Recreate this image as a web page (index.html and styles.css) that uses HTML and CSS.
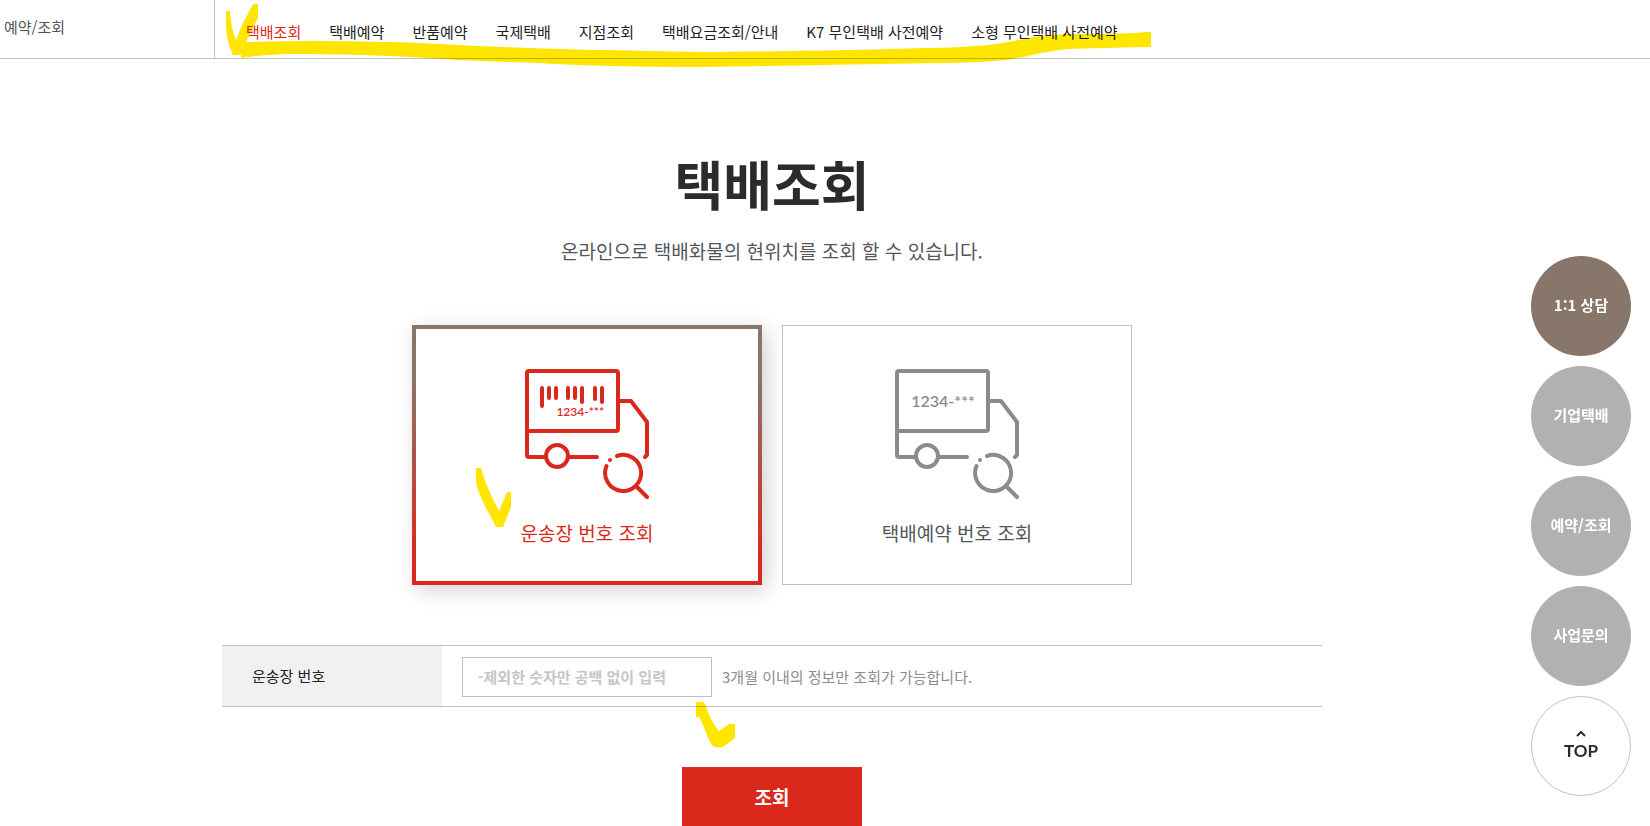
FILE: index.html
```
<!DOCTYPE html>
<html lang="ko">
<head>
	<meta charset="utf-8" />
	<title>택배조회</title>
	<meta name="viewport" content="width=device-width, initial-scale=1.0" />
	<link rel="stylesheet" href="styles.css">
</head>

<body>
	<header class="header">
		<div class="location">예약/조회</div>
		<nav class="subMenu">
			<ul>
				<li><a href="#" class="on">택배조회</a></li>
				<li><a href="#">택배예약</a></li>
				<li><a href="#">반품예약</a></li>
				<li><a href="#">국제택배</a></li>
				<li><a href="#">지점조회</a></li>
				<li><a href="#">택배요금조회/안내</a></li>
				<li><a href="#">K7 무인택배 사전예약</a></li>
				<li><a href="#">소형 무인택배 사전예약</a></li>
			</ul>
		</nav>
	</header>

	<main class="content">
		<h1>택배조회</h1>
		<p class="lead">온라인으로 택배화물의 현위치를 조회 할 수 있습니다.</p>

		<div class="typeList">
			<button type="button" class="type on">
				<svg class="truck" width="124" height="130" viewBox="0 0 124 130" aria-hidden="true">
					<rect x="2" y="2" width="91" height="60" rx="2" />
					<path d="M2 62V86Q2 88 4 88H20M44 88H72" />
					<circle cx="32" cy="87" r="11" />
					<path d="M93 32H106L122 53V86L120 88" />
					<path d="M92 87A18 18 0 1 1 81.500 97M111 117L122 128" />
					<circle class="dot" cx="85" cy="91" r="2" />
					<path d="M17 19V37M24 19V29M31 19V29M43 19V29M50 19V29M57 19V33M70 19V30M77 19V33" />
					<text x="79" y="47" font-size="12" text-anchor="end">1234-***</text>
				</svg>
				<span>운송장 번호 조회</span>
			</button>
			<button type="button" class="type">
				<svg class="truck" width="124" height="130" viewBox="0 0 124 130" aria-hidden="true">
					<rect x="2" y="2" width="91" height="60" rx="2" />
					<path d="M2 62V86Q2 88 4 88H20M44 88H72" />
					<circle cx="32" cy="87" r="11" />
					<path d="M93 32H106L122 53V86L120 88" />
					<path d="M92 87A18 18 0 1 1 81.500 97M111 117L122 128" />
					<circle class="dot" cx="85" cy="91" r="2" />
					<text x="48" y="38" font-size="16" text-anchor="middle">1234-***</text>
				</svg>
				<span>택배예약 번호 조회</span>
			</button>
		</div>

		<form class="searchForm" onsubmit="return false;">
			<table>
				<tr>
					<th scope="row"><label for="invoiceNo">운송장 번호</label></th>
					<td>
						<div class="field">
							<input type="text" id="invoiceNo" placeholder="-제외한 숫자만 공백 없이 입력">
							<span>3개월 이내의 정보만 조회가 가능합니다.</span>
						</div>
					</td>
				</tr>
			</table>
			<button type="submit" class="btnSearch">조회</button>
		</form>
	</main>

	<aside class="quick">
		<a href="#" class="on">1:1 상담</a>
		<a href="#">기업택배</a>
		<a href="#">예약/조회</a>
		<a href="#">사업문의</a>
		<a href="#" class="top">
			<svg width="10" height="6" viewBox="0 0 10 6" aria-hidden="true"><path d="M1 5L5 1L9 5" /></svg>
			TOP
		</a>
	</aside>

	<!-- highlighter marks -->
	<svg class="marker" width="1160" height="760" viewBox="0 0 1160 760" aria-hidden="true">
		<path d="M226 11H230Q231 28 236 40L242 25L253 4H258V18L246 42Q350 39 459 45Q540 49 600 50T703 52Q830 51 929 48Q975 47 995 44Q1010 42 1024 39Q1046 34 1078 34Q1130 34 1146 32H1151V47Q1100 48 1067 49Q1050 51 1032 55Q1012 60 994 61Q970 63 929 63Q830 65 703 67Q600 67 540 63Q500 62 459 60Q350 53 290 54Q258 55 241 58V55H233Q226 40 226 25Z" />
		<path d="M476 468H481Q486 487 499 511L507 492H511V507L503 527H496L482 500Q478 491 476 483Z" />
		<path d="M696 702H702Q704 702 705 704Q711 722 719 731L729 724H735V738L723 747Q715 748 713 746C708 742 704 724 699 717H696Z" />
	</svg>
</body>
</html>
```

FILE: styles.css
```
*{
	box-sizing: border-box;
}
body{
	position: relative;
	margin: 0;
	padding: 0;
	font: 15px/24px "Noto Sans CJK KR", sans-serif;
	color: #222;
	background: #fff;
}
a{
	color: inherit;
	text-decoration: none;
}
button, input{
	font: inherit;
	color: inherit;
	border-radius: 0;
}
button{
	cursor: pointer;
}

.header{
	display: flex;
	height: 59px;
	border-bottom: 1px solid #c1c1c1;
}
.location{
	width: 215px;
	padding: 15px 4px 0;
	border-right: 1px solid #c1c1c1;
	color: #53565a;
}
.subMenu ul{
	display: flex;
	gap: 28px;
	list-style: none;
	margin: 0;
	padding: 20px 0 0 31px;
	white-space: nowrap;
}
.subMenu .on{
	color: #da291c;
}

.content{
	padding: 94px 106px 0 0;
	text-align: center;
}
h1{
	margin: 0;
	font-size: 53px;
	line-height: 60px;
	font-weight: 700;
	color: #2b2b2b;
}
.lead{
	margin: 24px 0 0;
	font-size: 19px;
	line-height: 28px;
	color: #53565a;
}

.typeList{
	display: flex;
	justify-content: center;
	gap: 20px;
	margin-top: 60px;
}
.type{
	display: flex;
	flex-direction: column;
	align-items: center;
	justify-content: center;
	gap: 20px;
	width: 350px;
	height: 260px;
	padding: 6px 0 0;
	border: 1px solid #c1c1c1;
	background: #fff;
	font-size: 19px;
	line-height: 28px;
	color: #53565a;
}
.type.on{
	border: 4px solid #da291c;
	border-image: linear-gradient(#88766a 20%, #da291c 90%) 4;
	box-shadow: 5px 5px 20px rgba(0,0,0,.18);
	color: #da291c;
}
.truck{
	fill: none;
	stroke: #898c8f;
	stroke-width: 4;
	stroke-linecap: round;
	stroke-linejoin: round;
}
.truck text, .truck .dot{
	fill: #898c8f;
	stroke: none;
}
.truck text{
	font-family: Lato, sans-serif;
	font-weight: 600;
}
.on .truck{
	stroke: #da291c;
}
.on .truck text, .on .truck .dot{
	fill: #da291c;
}

.searchForm{
	max-width: 1100px;
	margin: 60px auto 0;
}
.searchForm table{
	width: 100%;
	border-collapse: separate;
	border-spacing: 0;
	border-top: 1px solid #c1c1c1;
	border-bottom: 1px solid #c1c1c1;
	text-align: left;
}
.searchForm th{
	width: 220px;
	padding: 0 30px;
	background: #f1f1f1;
	font-weight: 400;
}
.searchForm td{
	padding: 11px 20px 9px;
}
.field{
	display: flex;
	align-items: center;
	gap: 10px;
	color: #898c8f;
}
.field input{
	width: 250px;
	height: 40px;
	padding: 0 15px 2px;
	border: 1px solid #c1c1c1;
	color: #222;
}
.field input::placeholder{
	color: #c4c6c8;
	font-weight: 700;
	opacity: 1;
}
.btnSearch{
	display: block;
	width: 180px;
	height: 59px;
	margin: 60px auto 0;
	padding: 0;
	border: 0;
	background: #da291c;
	color: #fff;
	font-size: 19px;
	font-weight: 700;
}

.quick{
	position: fixed;
	top: 256px;
	right: 19px;
	display: flex;
	flex-direction: column;
	gap: 10px;
}
.quick a{
	display: flex;
	flex-direction: column;
	align-items: center;
	justify-content: center;
	width: 100px;
	height: 100px;
	padding-bottom: 2px;
	border-radius: 50%;
	background: #b1b1b1;
	color: #fff;
	font-weight: 700;
}
.quick a.on{
	background: #88766a;
}
.quick a.top{
	gap: 2px;
	padding: 2px 0 0;
	border: 1px solid #c1c1c1;
	background: #fff;
	color: #2b2b2b;
	font-family: Lato, sans-serif;
	font-size: 17px;
}
.quick svg{
	fill: none;
	stroke: #2b2b2b;
	stroke-width: 2;
}

.marker{
	position: absolute;
	top: 0;
	left: 0;
	fill: #ffe600;
	mix-blend-mode: multiply;
	pointer-events: none;
}
```
